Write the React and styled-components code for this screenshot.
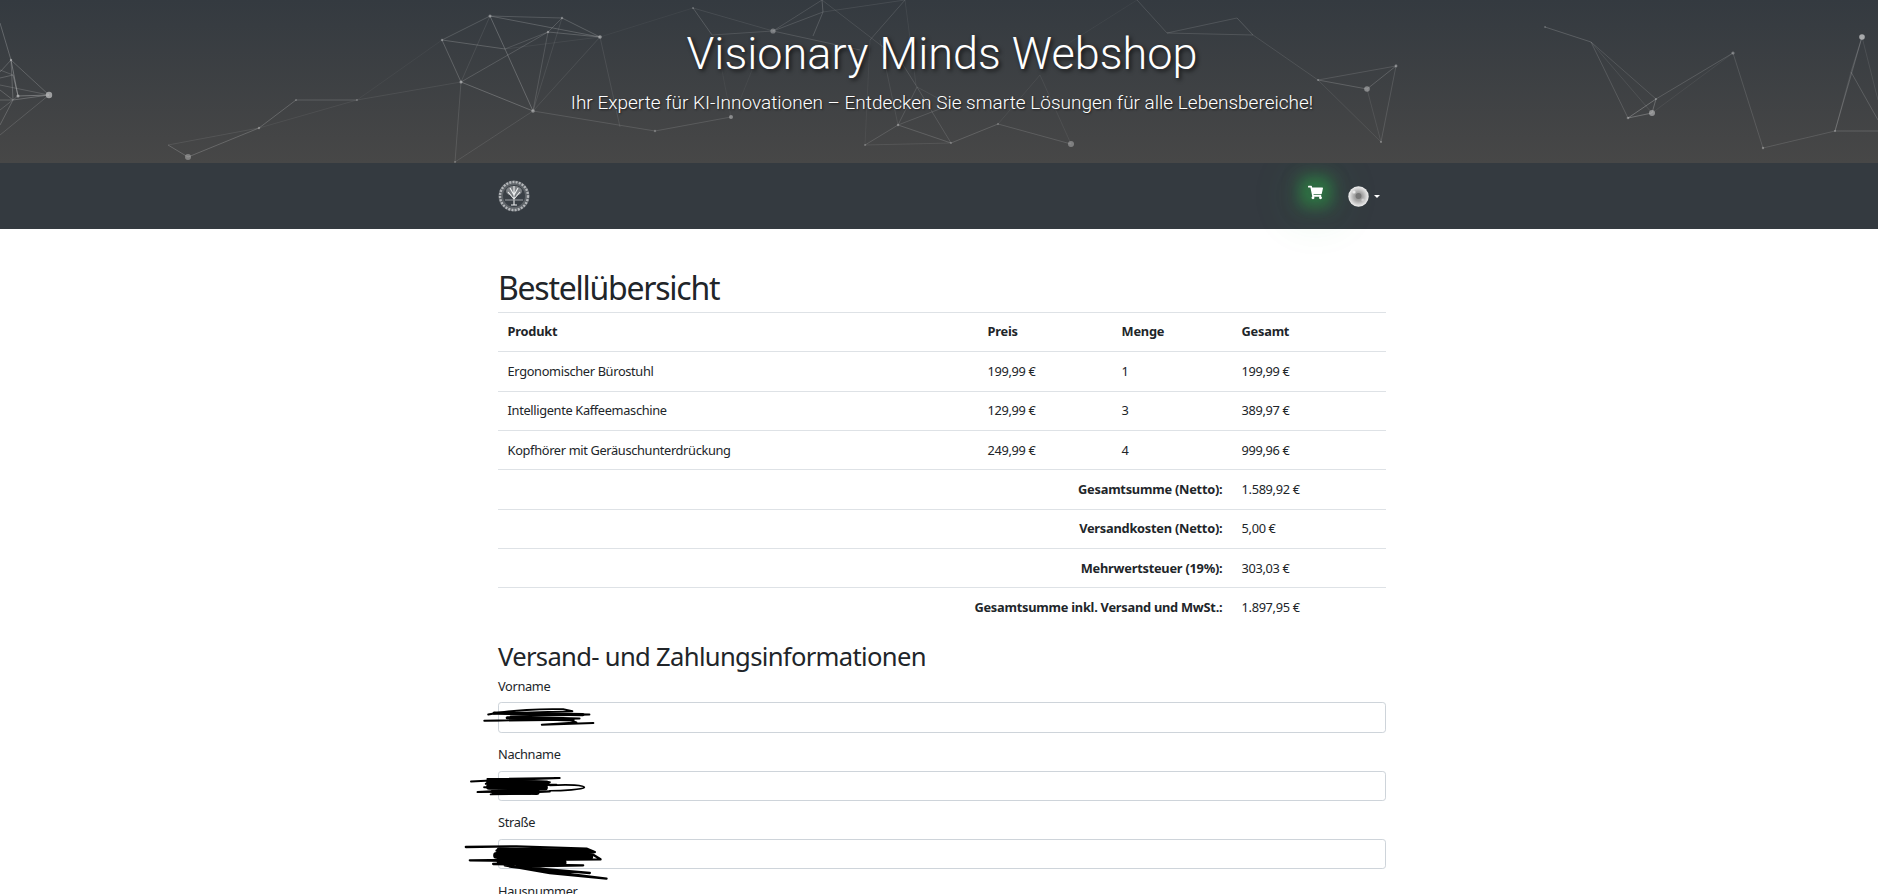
import React from 'react'
import styled, { createGlobalStyle } from 'styled-components'
import { FaShoppingCart } from 'react-icons/fa'

const GlobalStyle = createGlobalStyle`
html, body {
    margin: 0;
    padding: 0;
    height: 100%;
    overflow: hidden;
    background: #fff;
}
body {
    font-family: 'Noto Sans', 'Open Sans', sans-serif;
    font-size: 12.8px;
    line-height: 1.5;
    color: #212529;
}
* { box-sizing: border-box; }
`

const Hero = styled.header`
position: relative;
height: 163px;
padding: 27px 0 0 6px;
text-align: center;
color: #fff;
font-family: 'Roboto', sans-serif;
background: linear-gradient(180deg, #343a40 0%, #474747 100%);
overflow: hidden;
`
const Net = styled.svg`
position: absolute;
left: 0;
top: 0;
`
const Title = styled.h1`
position: relative;
margin: 0 0 8px;
font-size: 45px;
font-weight: 300;
line-height: 1.2;
text-shadow: 2px 2px 4px rgba(0,0,0,.7);
`
const Lead = styled.p`
position: relative;
margin: 0;
font-size: 19px;
font-weight: 300;
line-height: 1.5;
text-shadow: 1px 1px 2px rgba(0,0,0,.6);
`
const NavBar = styled.nav`
height: 66px;
padding-left: 6px;
background: #343a40;
`
const NavInner = styled.div`
width: 888px;
height: 100%;
margin: 0 auto;
padding-right: 6px;
display: flex;
align-items: center;
justify-content: space-between;
`
const NavRight = styled.div`
display: flex;
align-items: center;
`
const CartLink = styled.a`
width: 15px;
height: 13px;
margin-top: -10px;
margin-right: 25px;
display: flex;
color: #fff;
background: rgba(40,167,69,.45);
box-shadow: 0 0 16px 8px rgba(40,167,69,.55), 0 4px 46px 14px rgba(40,167,69,.14);
`
const Caret = styled.span`
width: 0;
height: 0;
margin-left: 5px;
border-top: 3.8px solid #fff;
border-left: 3.8px solid transparent;
border-right: 3.8px solid transparent;
`
const Page = styled.main`
padding-left: 6px;
`
const Container = styled.div`
width: 888px;
margin: 0 auto;
padding-top: 40px;
`
const Heading = styled.h2`
margin: 0 0 4.4px;
font-size: 32px;
font-weight: 400;
line-height: 1.2;
letter-spacing: -1.25px;
`
const SubHeading = styled.h3`
margin: 15.6px 0 3.6px;
font-size: 25.6px;
font-weight: 400;
line-height: 1.2;
letter-spacing: -0.68px;
`
const Table = styled.table`
width: 888px;
table-layout: fixed;
border-collapse: collapse;
`
const Col = styled.col`
width: ${props => props.w}px;
`
const Th = styled.th`
padding: 9.6px;
text-align: left;
font-weight: 700;
letter-spacing: -0.24px;
border-top: 1px solid #dee2e6;
`
const Td = styled.td`
padding: 9.6px;
border-top: 1px solid #dee2e6;
text-align: ${props => props.$right ? 'right' : 'left'};
font-weight: ${props => props.$right ? 700 : 400};
letter-spacing: ${props => props.$right ? '-0.24px' : '-0.34px'};
`
const Field = styled.div`
position: relative;
margin-bottom: 12.4px;
`
const Label = styled.label`
display: block;
margin-bottom: 6.4px;
letter-spacing: -0.34px;
`
const Input = styled.input`
display: block;
width: 100%;
height: 30.4px;
border: 1px solid #ced4da;
border-radius: 3.2px;
background: #fff;
`
const Scribble = styled.svg`
position: absolute;
left: ${props => props.$left}px;
top: ${props => props.$top}px;
fill: none;
stroke: #000;
stroke-linejoin: round;
stroke-linecap: round;
`

// network drawing in the hero, coordinates in page pixels
const links = [
    // left edge
    [0,23,11,60,.35],[11,60,49,95,.3],[11,60,18,96,.45],[49,95,18,96,.45],[49,95,13,100,.35],[49,95,0,135,.22],
    [11,60,0,72,.3],[0,78,13,75,.3],[0,85,49,95,.25],[0,90,13,100,.3],[13,75,18,96,.35],[13,100,0,125,.3],[0,100,13,100,.3],
    [11,60,13,100,.3],[0,70,13,75,.25],[18,96,0,110,.25],
    // chain
    [168,145,188,157,.3],[188,157,259,128,.3],[168,145,259,128,.14],[259,128,296,100,.3],[296,100,357,100,.25],
    [259,128,357,100,.1],[357,100,461,82,.12],[357,100,442,40,.07],
    // second cluster
    [442,40,490,16,.25],[490,16,562,18,.25],[490,16,600,37,.3],[562,18,600,37,.3],[562,18,548,32,.25],[548,32,600,37,.3],
    [442,40,505,49,.3],[505,49,600,37,.1],[442,40,461,82,.3],[490,16,461,82,.14],[490,16,505,49,.35],[505,49,533,111,.35],
    [505,49,548,32,.22],[461,82,548,32,.25],[461,82,533,111,.35],[461,82,455,162,.18],[455,162,533,111,.16],
    [548,32,533,111,.22],[562,18,533,111,.14],[600,37,533,111,.14],[533,111,655,131,.2],[655,131,731,117,.2],
    [600,37,620,127,.14],[600,37,693,8,.07],[693,8,712,35,.25],[712,35,773,31,.2],[773,31,860,50,.22],[693,8,773,31,.14],
    [773,31,822,0,.2],[773,31,823,12,.22],[823,12,813,36,.25],[822,0,823,12,.3],[823,12,905,0,.14],[822,0,900,60,.16],[905,0,870,40,.2],
    [720,60,731,117,.07],[760,50,736,110,.07],
    // behind the subtitle
    [898,125,865,145,.22],[865,145,951,143,.14],[898,125,951,143,.25],[951,143,998,124,.25],[998,124,1071,144,.22],
    [998,124,1040,75,.1],[1040,75,1071,144,.1],[917,87,951,143,.2],[917,87,898,125,.2],[900,60,917,87,.2],[880,40,898,125,.12],
    [870,40,865,145,.08],[898,125,950,105,.2],[917,87,960,110,.12],[905,0,916,85,.1],
    // right of the title
    [1137,0,1167,33,.2],[1167,33,1237,18,.2],[1167,33,1253,35,.2],[1237,18,1253,35,.25],[1253,35,1318,80,.17],
    [1318,80,1396,66,.2],[1318,80,1367,89,.28],[1367,89,1396,66,.28],[1396,66,1381,142,.2],[1367,89,1381,142,.14],[1318,80,1381,142,.14],
    [1137,0,1050,55,.07],
    // right side
    [1545,27,1591,42,.28],[1591,42,1656,99,.2],[1591,42,1628,118,.22],[1591,42,1652,113,.14],[1656,99,1628,118,.4],
    [1656,99,1652,113,.35],[1628,118,1652,113,.4],[1656,99,1733,53,.24],[1652,113,1733,53,.1],[1733,53,1763,148,.2],
    [1763,148,1835,131,.2],[1835,131,1878,131,.25],[1835,131,1862,37,.28],[1835,131,1851,72,.16],[1851,72,1862,37,.2],
    [1851,72,1878,120,.25],[1862,37,1878,100,.15],
]

const dots = [
    [49,95,3.2,.8],[18,96,1.5,.8],[11,60,1.2,.7],[188,157,3,.5],[259,128,1.2,.5],[296,100,1,.4],[357,100,1,.4],
    [442,40,1.2,.5],[490,16,1.5,.6],[562,18,1.2,.5],[600,37,1.8,.7],[548,32,1.2,.6],[461,82,1.5,.7],[533,111,1.8,.6],
    [655,131,1.2,.4],[731,117,2,.6],[455,162,1,.4],[693,8,1,.4],[773,31,2.6,.5],[898,125,1.2,.5],[865,145,1,.4],
    [951,143,1,.4],[998,124,1,.4],[1071,144,3,.5],[1318,80,1,.5],[1367,89,2.8,.6],[1396,66,1.4,.6],[1381,142,1,.5],
    [1652,113,3,.65],[1628,118,1.3,.5],[1656,99,1.1,.5],[1733,53,1.6,.5],[1763,148,1.2,.5],[1835,131,1.1,.5],[1862,37,2.8,.9],[1545,27,1,.35],
]

const NetWork = () => (
    <Net width="1878" height="163" viewBox="0 0 1878 163">
        <g opacity=".62">
            {links.map(([x1, y1, x2, y2, o], i) => (
                <line key={i} x1={x1} y1={y1} x2={x2} y2={y2} stroke="#fff" strokeOpacity={o} strokeWidth="1" />
            ))}
            {dots.map(([x, y, r, o], i) => (
                <circle key={i} cx={x} cy={y} r={r} fill="#fff" fillOpacity={o} />
            ))}
        </g>
    </Net>
)

const Logo = () => (
    <svg width="32" height="32" viewBox="0 0 32 32">
        <circle cx="16" cy="16" r="15.5" fill="#5d6267" />
        <circle cx="16" cy="16" r="14" fill="none" stroke="#b4b7ba" strokeWidth="2.4" strokeDasharray="2 1.2" />
        <circle cx="16" cy="16" r="11" fill="#3a4046" />
        <ellipse cx="16" cy="11" rx="8" ry="5" fill="#fff" fillOpacity=".35" />
        <path d="M16 25V13M16 19L10 12M16 19L22 12M16 15L12 8M16 15L20 8M16 13V6M13 25H19" stroke="#eef0f1" strokeWidth="1.1" fill="none" />
        <path d="M7 20H25" stroke="#9ea2a6" strokeWidth="1" />
    </svg>
)

const Globe = () => (
    <svg width="21" height="21" viewBox="0 0 21 21">
        <defs>
            <radialGradient id="moon" cx="50%" cy="50%" r="50%">
                <stop offset="0%" stopColor="#8c8c8c" />
                <stop offset="45%" stopColor="#a8a8a8" />
                <stop offset="85%" stopColor="#dedede" />
                <stop offset="100%" stopColor="#eee" />
            </radialGradient>
        </defs>
        <circle cx="10.5" cy="10.5" r="10.2" fill="url(#moon)" />
        <circle cx="10.5" cy="10" r="3" fill="#777" />
        <circle cx="6" cy="6" r="1.6" fill="#e8e8e8" />
        <circle cx="15" cy="14" r="1.6" fill="#cfcfcf" />
    </svg>
)

const products = [
    { name: 'Ergonomischer Bürostuhl', price: '199,99 €', qty: 1, total: '199,99 €' },
    { name: 'Intelligente Kaffeemaschine', price: '129,99 €', qty: 3, total: '389,97 €' },
    { name: 'Kopfhörer mit Geräuschunterdrückung', price: '249,99 €', qty: 4, total: '999,96 €' },
]

const totals = [
    ['Gesamtsumme (Netto):', '1.589,92 €'],
    ['Versandkosten (Netto):', '5,00 €'],
    ['Mehrwertsteuer (19%):', '303,03 €'],
    ['Gesamtsumme inkl. Versand und MwSt.:', '1.897,95 €'],
]

const App = () => (
    <>
        <GlobalStyle />
        <Hero>
            <NetWork />
            <Title>Visionary Minds Webshop</Title>
            <Lead>Ihr Experte für KI-Innovationen – Entdecken Sie smarte Lösungen für alle Lebensbereiche!</Lead>
        </Hero>
        <NavBar>
            <NavInner>
                <Logo />
                <NavRight>
                    <CartLink><FaShoppingCart size={15} /></CartLink>
                    <Globe />
                    <Caret />
                </NavRight>
            </NavInner>
        </NavBar>
        <Page>
            <Container>
                <Heading>Bestellübersicht</Heading>
                <Table>
                    <colgroup>
                        <Col w={480} /><Col w={134} /><Col w={120} /><Col w={154} />
                    </colgroup>
                    <thead>
                        <tr><Th>Produkt</Th><Th>Preis</Th><Th>Menge</Th><Th>Gesamt</Th></tr>
                    </thead>
                    <tbody>
                        {products.map(p => (
                            <tr key={p.name}><Td>{p.name}</Td><Td>{p.price}</Td><Td>{p.qty}</Td><Td>{p.total}</Td></tr>
                        ))}
                        {totals.map(([label, value]) => (
                            <tr key={label}><Td colSpan={3} $right>{label}</Td><Td>{value}</Td></tr>
                        ))}
                    </tbody>
                </Table>
                <SubHeading>Versand- und Zahlungsinformationen</SubHeading>
                <Field>
                    <Label>Vorname</Label>
                    <Input />
                    <Scribble $left={-18} $top={29} width="117" height="23" viewBox="90 230 350 70" strokeWidth="6">
                        <path d="M112 256C180 242 280 238 340 240L368 246L160 252L420 256L180 262L390 268L100 275L360 272L380 280L275 287L432 282" />
                        <path d="M130 252L400 256M170 266L370 272" strokeWidth="10" />
                    </Scribble>
                </Field>
                <Field>
                    <Label>Nachname</Label>
                    <Input />
                    <Scribble $left={-31} $top={29} width="123" height="23" viewBox="50 435 370 70" strokeWidth="6">
                        <path d="M60 458L120 455L330 447L110 450L300 460L105 465L320 468M100 475L250 480L80 490L300 488L120 497L240 495" />
                        <path d="M115 460L290 464M115 474L285 476M130 488L260 490" strokeWidth="18" />
                        <path d="M300 470C360 465 405 470 405 476C400 482 340 486 300 486" strokeWidth="5" />
                    </Scribble>
                </Field>
                <Field>
                    <Label>Straße</Label>
                    <Input />
                    <Scribble $left={-35} $top={30} width="147" height="40" viewBox="40 645 440 120" strokeWidth="7">
                        <path d="M48 657L200 655L410 662L435 672L140 668L430 680L452 694L60 697L330 700L130 708L400 712L200 716L420 735L180 716L470 752L300 735L165 712" />
                        <path d="M150 668L410 672M140 682L420 686M150 698L340 704" strokeWidth="20" />
                    </Scribble>
                </Field>
                <Field>
                    <Label>Hausnummer</Label>
                    <Input />
                </Field>
            </Container>
        </Page>
    </>
)

export default App
